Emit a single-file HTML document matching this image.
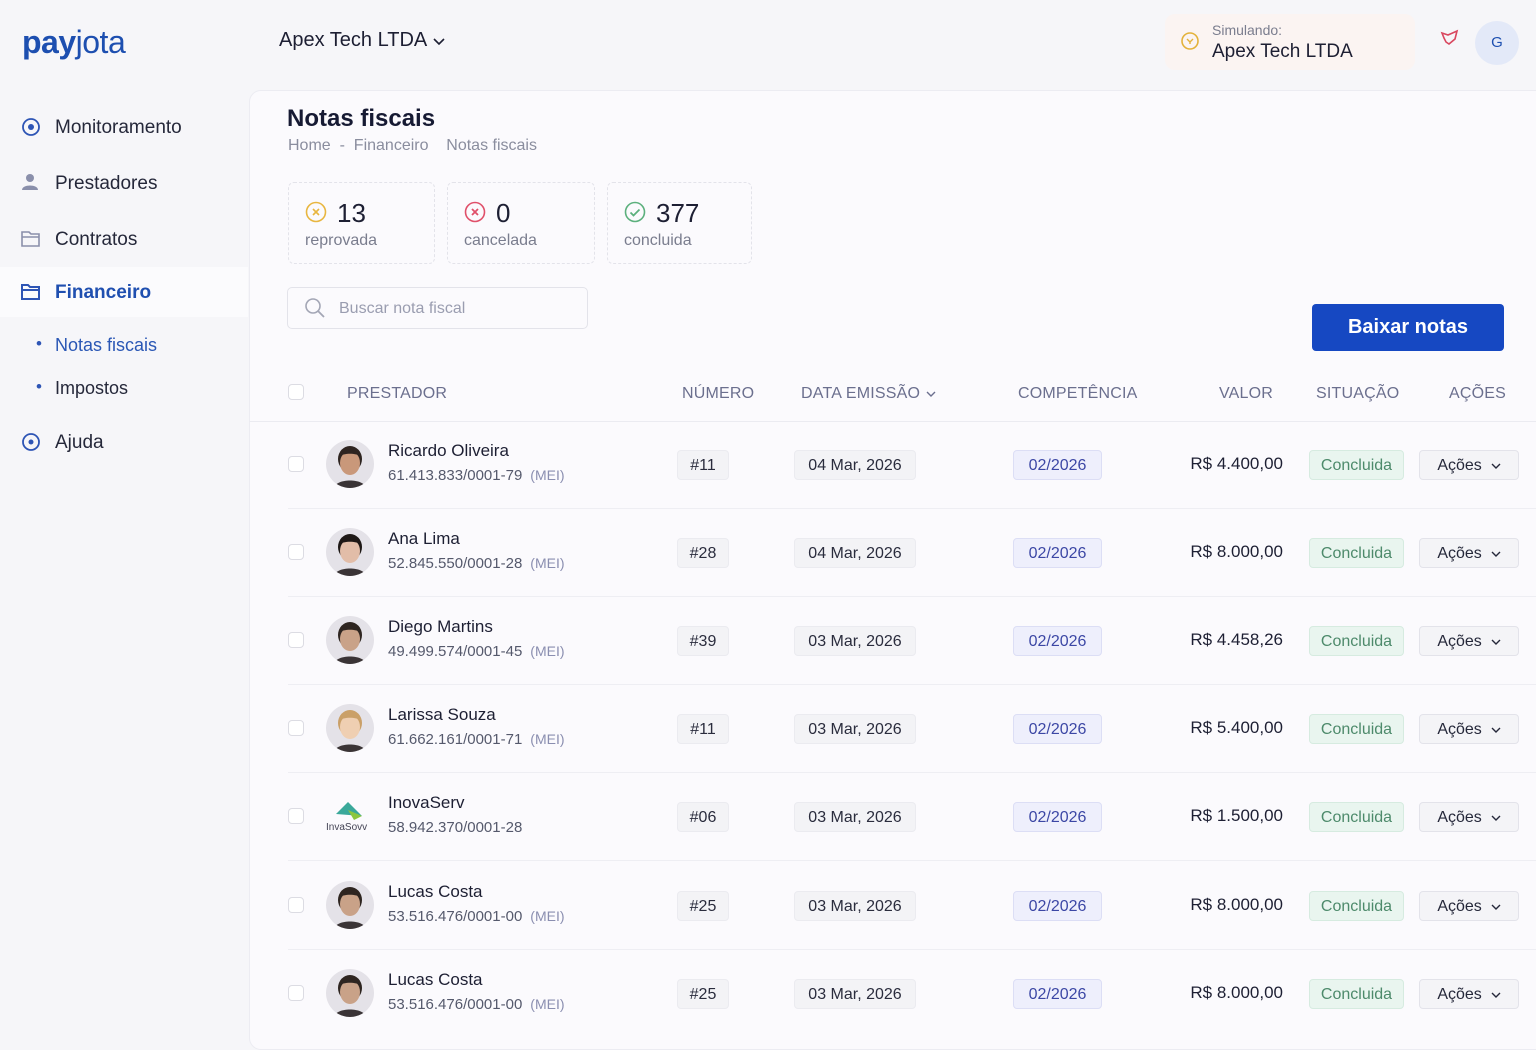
<!DOCTYPE html>
<html><head><meta charset="utf-8"><style>
*{box-sizing:border-box;margin:0;padding:0}
body{width:1536px;height:1024px;overflow:hidden;background:#f6f6f9;font-family:"Liberation Sans",sans-serif;color:#1d1f33;position:relative}
.a{position:absolute}
.nav{font-size:19px;color:#25283a}
.panel{left:249px;top:90px;width:1300px;height:960px;background:#fbfafd;border:1px solid #ececf2;border-radius:12px}
.card{top:182px;height:82px;border:1px dashed #e3e3ea;border-radius:6px;background:#fbfafd}
.card .n{position:absolute;left:48px;top:15px;font-size:26px;color:#1d1f33}
.card .l{position:absolute;left:16px;top:49px;font-size:16px;color:#7a7d8e}
.card svg{position:absolute;left:16px;top:18px}
.th{top:385px;font-size:16px;color:#6b6f8e;letter-spacing:.2px}
.badge{height:30px;border:1px solid #ebebf0;background:#f3f3f6;border-radius:4px;font-size:16px;line-height:29px;text-align:center;color:#2a2c3d}
.comp{background:#eeeffc;border-color:#dcdef5;color:#3c47a5}
.sit{background:#e9f5ef;border-color:#d6ebe0;color:#4d8a6b}
.acao{background:#f4f4f7;border-color:#e3e3ea;color:#25283a}
.name{font-size:17px;color:#1d1f33}
.cnpj{font-size:15px;color:#55596c}
.mei{font-size:14px;color:#8a8eb0;margin-left:8px}
.sep{left:288px;width:1248px;height:1px;background:#eeeef3}
.cb{width:16px;height:16px;border:1px solid #dcdce3;border-radius:4px;background:#fff}
.av{width:48px;height:48px;border-radius:50%;overflow:hidden}
</style></head><body>
<div class="a" style="left:22px;top:24px;font-size:32px;letter-spacing:-0.5px"><span style="color:#1d4fb0;font-weight:bold">pay</span><span style="color:#1d4fb0">jota</span></div>
<div class="a" style="left:279px;top:29px;font-size:20px;color:#1d1f33">Apex Tech LTDA <svg width="14" height="10"><path d="M2 3l5 5 5-5" stroke="#1d1f33" stroke-width="1.6" fill="none"/></svg></div>

<div class="a" style="left:1165px;top:14px;width:250px;height:56px;background:#fbf4f2;border-radius:10px"></div>
<svg class="a" style="left:1180px;top:31px" width="20" height="20"><circle cx="10" cy="10" r="8" fill="none" stroke="#e3b23a" stroke-width="1.6"/><path d="M7 8l3 3 3-3M10 11v2" stroke="#e3b23a" stroke-width="1.4" fill="none"/></svg>
<div class="a" style="left:1212px;top:22px;font-size:14px;color:#7a7d8e">Simulando:</div>
<div class="a" style="left:1212px;top:41px;font-size:19px;color:#1d1f33">Apex Tech LTDA</div>
<svg class="a" style="left:1439px;top:29px" width="22" height="20"><path d="M3 4l6 2 9-4-2 8-6 5-3-2-2-4z" fill="none" stroke="#d9475f" stroke-width="1.6"/></svg>
<div class="a" style="left:1475px;top:21px;width:44px;height:44px;border-radius:50%;background:#e3e9f8;text-align:center;line-height:44px;font-size:15px;color:#1d4fb0">G</div>

<svg class="a" style="left:21px;top:117px" width="20" height="20"><circle cx="10" cy="10" r="8" fill="none" stroke="#2e55b5" stroke-width="1.8"/><circle cx="10" cy="10" r="3" fill="#2e55b5"/></svg>
<div class="a nav" style="left:55px;top:117px">Monitoramento</div>
<svg class="a" style="left:21px;top:173px" width="18" height="18"><circle cx="9" cy="5" r="4" fill="#8a8fab"/><path d="M1 17c0-6 16-6 16 0z" fill="#8a8fab"/></svg>
<div class="a nav" style="left:55px;top:173px">Prestadores</div>
<svg class="a" style="left:21px;top:230px" width="20" height="18"><path d="M1 2h7l2 2h8v12H1z" fill="none" stroke="#8a8fab" stroke-width="1.6"/><path d="M1 7h17" stroke="#8a8fab" stroke-width="1.4"/></svg>
<div class="a nav" style="left:55px;top:229px">Contratos</div>
<div class="a" style="left:0;top:267px;width:248px;height:50px;background:#fbfbfd"></div>
<svg class="a" style="left:21px;top:283px" width="20" height="18"><path d="M1 2h6l2 2h9v12H1z M1 7h17" fill="none" stroke="#2e55b5" stroke-width="2"/></svg>
<div class="a nav" style="left:55px;top:282px;color:#1f4fb0;font-weight:bold">Financeiro</div>
<div class="a" style="left:36px;top:334px;font-size:17px;color:#2e55b5">•</div>
<div class="a nav" style="left:55px;top:335px;font-size:18px;color:#2a57b5">Notas fiscais</div>
<div class="a" style="left:36px;top:377px;font-size:17px;color:#2e55b5">•</div>
<div class="a nav" style="left:55px;top:378px;font-size:18px">Impostos</div>
<svg class="a" style="left:21px;top:432px" width="20" height="20"><circle cx="10" cy="10" r="8" fill="none" stroke="#2e55b5" stroke-width="1.8"/><circle cx="10" cy="10" r="2.5" fill="#2e55b5"/></svg>
<div class="a nav" style="left:55px;top:432px">Ajuda</div>

<div class="a panel"></div>
<div class="a" style="left:287px;top:105px;font-size:24px;font-weight:bold;color:#161a33">Notas fiscais</div>
<div class="a" style="left:288px;top:137px;font-size:16px;color:#8a8d9e">Home &nbsp;-&nbsp; Financeiro &nbsp;&nbsp; Notas fiscais</div>

<div class="a card" style="left:288px;width:147px"><svg width="22" height="22"><circle cx="11" cy="11" r="9.5" fill="none" stroke="#e8b640" stroke-width="1.6"/><path d="M8 8l6 6M14 8l-6 6" stroke="#e8b640" stroke-width="1.6"/></svg><div class="n">13</div><div class="l">reprovada</div></div>
<div class="a card" style="left:447px;width:148px"><svg width="22" height="22"><circle cx="11" cy="11" r="9.5" fill="none" stroke="#e0506a" stroke-width="1.6"/><path d="M8 8l6 6M14 8l-6 6" stroke="#e0506a" stroke-width="1.8"/></svg><div class="n">0</div><div class="l">cancelada</div></div>
<div class="a card" style="left:607px;width:145px"><svg width="22" height="22"><circle cx="11" cy="11" r="9.5" fill="none" stroke="#5cb07d" stroke-width="1.6"/><path d="M6.5 11.5l3 3 6-6" stroke="#5cb07d" stroke-width="1.8" fill="none"/></svg><div class="n">377</div><div class="l">concluida</div></div>

<div class="a" style="left:287px;top:287px;width:301px;height:42px;border:1px solid #e3e3ea;border-radius:5px;background:#fbfafd"></div>
<svg class="a" style="left:304px;top:297px" width="22" height="22"><circle cx="9" cy="9" r="7" fill="none" stroke="#a3a6b5" stroke-width="1.6"/><path d="M14 14l6 6" stroke="#a3a6b5" stroke-width="1.8"/></svg>
<div class="a" style="left:339px;top:300px;font-size:16px;color:#9a9db0">Buscar nota fiscal</div>
<div class="a" style="left:1312px;top:304px;width:192px;height:47px;background:#1648c2;border-radius:4px;color:#fff;font-size:20px;font-weight:bold;text-align:center;line-height:47px">Baixar notas</div>

<div class="a cb" style="left:288px;top:384px"></div>
<div class="a th" style="left:347px">PRESTADOR</div>
<div class="a th" style="left:682px">NÚMERO</div>
<div class="a th" style="left:801px">DATA EMISSÃO <svg width="12" height="8"><path d="M2 2l4 4 4-4" stroke="#6b6f8e" stroke-width="1.4" fill="none"/></svg></div>
<div class="a th" style="left:1018px">COMPETÊNCIA</div>
<div class="a th" style="left:1219px">VALOR</div>
<div class="a th" style="left:1316px">SITUAÇÃO</div>
<div class="a th" style="left:1449px">AÇÕES</div>
<div class="a" style="left:249px;top:421px;width:1287px;height:1px;background:#ebebf1"></div>

<div id="rows"></div>
<script>
var R=[["Ricardo Oliveira","61.413.833/0001-79",1,"#11","04 Mar, 2026","R$ 4.400,00","#c9987a","#2e2420"],
["Ana Lima","52.845.550/0001-28",1,"#28","04 Mar, 2026","R$ 8.000,00","#e2bda8","#1e1816"],
["Diego Martins","49.499.574/0001-45",1,"#39","03 Mar, 2026","R$ 4.458,26","#c9a288","#2e2520"],
["Larissa Souza","61.662.161/0001-71",1,"#11","03 Mar, 2026","R$ 5.400,00","#efcfb2","#caa068"],
["InovaServ","58.942.370/0001-28",0,"#06","03 Mar, 2026","R$ 1.500,00","",""],
["Lucas Costa","53.516.476/0001-00",1,"#25","03 Mar, 2026","R$ 8.000,00","#c9a288","#2e2520"],
["Lucas Costa","53.516.476/0001-00",1,"#25","03 Mar, 2026","R$ 8.000,00","#c9a288","#2e2520"]];
var h="";
R.forEach(function(r,i){var c=464+i*88.1;
h+='<div class="a cb" style="left:288px;top:'+(c-8)+'px"></div>';
if(r[6])h+='<svg class="a av" style="left:326px;top:'+(c-24)+'px" width="48" height="48"><rect width="48" height="48" fill="#e4e2e8"/><path d="M8 48c2-10 30-10 32 0z" fill="#3a3436"/><ellipse cx="24" cy="19" rx="12" ry="13" fill="'+r[7]+'"/><ellipse cx="24" cy="23" rx="10" ry="12" fill="'+r[6]+'"/><path d="M14 16c2-8 18-8 20 0c-4-3-16-3-20 0z" fill="'+r[7]+'"/></svg>';
else h+='<svg class="a" style="left:326px;top:'+(c-16)+'px" width="48" height="32"><path d="M10 14L22 2 36 16z" fill="#3aa89a"/><path d="M22 10l14 6-8 4z" fill="#8cc63f"/><text x="0" y="30" font-size="10" font-family="Liberation Sans" fill="#445">InvaSovv</text></svg>';
h+='<div class="a name" style="left:388px;top:'+(c-23)+'px">'+r[0]+'</div>';
h+='<div class="a cnpj" style="left:388px;top:'+(c+3)+'px">'+r[1]+(r[2]?'<span class="mei">(MEI)</span>':'')+'</div>';
h+='<div class="a badge" style="left:677px;top:'+(c-14)+'px;width:52px">'+r[3]+'</div>';
h+='<div class="a badge" style="left:794px;top:'+(c-14)+'px;width:122px">'+r[4]+'</div>';
h+='<div class="a badge comp" style="left:1013px;top:'+(c-14)+'px;width:89px">02/2026</div>';
h+='<div class="a" style="left:1140px;width:143px;text-align:right;font-size:17px;top:'+(c-10)+'px">'+r[5]+'</div>';
h+='<div class="a badge sit" style="left:1309px;top:'+(c-14)+'px;width:95px">Concluida</div>';
h+='<div class="a badge acao" style="left:1419px;top:'+(c-14)+'px;width:100px">Ações &nbsp;<svg width="10" height="7"><path d="M1 1l4 4 4-4" stroke="#25283a" stroke-width="1.4" fill="none"/></svg></div>';
if(i<6)h+='<div class="a sep" style="top:'+(c+44)+'px"></div>';
});
document.getElementById("rows").innerHTML=h;
</script>
</body></html>
